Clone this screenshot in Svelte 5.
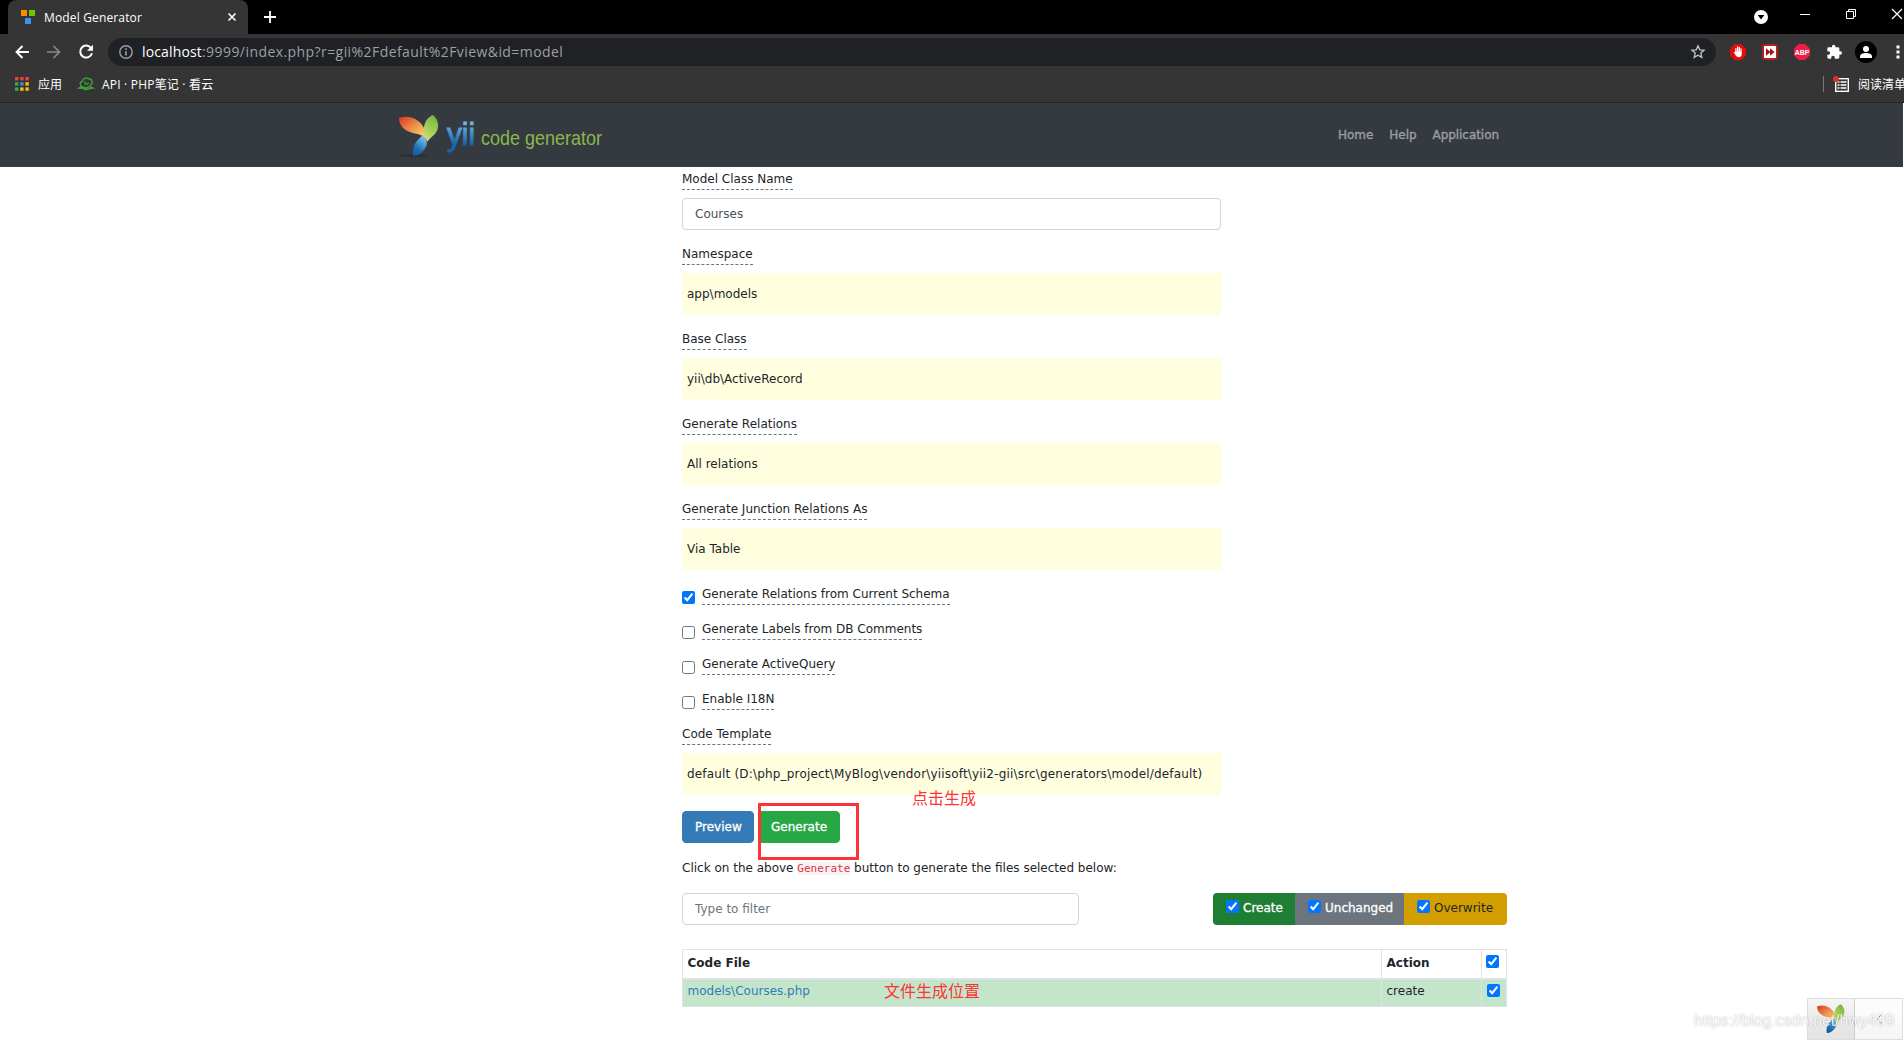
<script>
	let className = $state('Courses');
	let filter = $state('');

	const navLinks = ['Home', 'Help', 'Application'];

	const stickyFields = [
		{ label: 'Namespace', value: 'app\\models' },
		{ label: 'Base Class', value: 'yii\\db\\ActiveRecord' },
		{ label: 'Generate Relations', value: 'All relations' },
		{ label: 'Generate Junction Relations As', value: 'Via Table' }
	];

	let options = $state([
		{ label: 'Generate Relations from Current Schema', checked: true },
		{ label: 'Generate Labels from DB Comments', checked: false },
		{ label: 'Generate ActiveQuery', checked: false },
		{ label: 'Enable I18N', checked: false }
	]);

	let actions = $state([
		{ label: 'Create', kind: 'create', checked: true },
		{ label: 'Unchanged', kind: 'unchanged', checked: true },
		{ label: 'Overwrite', kind: 'overwrite', checked: true }
	]);

	const template = 'default (D:\\php_project\\MyBlog\\vendor\\yiisoft\\yii2-gii\\src\\generators\\model/default)';
	const gridColors = ['#ea4335', '#ea4335', '#ea4335', '#34a853', '#4285f4', '#fbbc04', '#34a853', '#fbbc04', '#fbbc04'];
</script>

{#snippet leaves()}
	<path d="M0 3C11-1 22 5 26 15C27 18 27 21 27 24C24 20 19 19 14 18C5 16 0 10 0 3Z" fill="url(#leafRed)" />
	<path d="M34 0C40 5 41 13 36 19C33 22 30 24 28 27C27 22 24 18 25 12C26 6 29 2 34 0Z" fill="url(#leafGreen)" />
	<path d="M24 20C27 23 29 28 27 32C24 37 20 41 14 41C13 36 14 31 17 27C19 24 22 22 24 20Z" fill="url(#leafBlue)" />
{/snippet}

<div class="browser">
	<div class="tabs">
		<div class="tab">
			<svg class="favicon" width="14" height="14" viewBox="0 0 14 14">
				<path d="M0 0h6v6H0z" fill="#ff8a00" />
				<path d="M8 0h6v6H8z" fill="#70c400" />
				<path d="M4 8h6v6H4z" fill="#3b92f0" />
			</svg>
			<span>Model Generator</span>
			<svg class="close" width="10" height="10" viewBox="0 0 10 10"><path d="M1.500 1.500l7 7M8.500 1.500l-7 7" stroke="#fff" stroke-width="1.6" /></svg>
		</div>
		<svg class="plus" width="12" height="12" viewBox="0 0 12 12"><path d="M6 0v12M0 6h12" stroke="#fff" stroke-width="1.8" /></svg>
		<div class="window">
			<svg width="14" height="14" viewBox="0 0 14 14"><circle cx="7" cy="7" r="7" fill="#fff" /><path d="M3.7 5h6.6L7 9.5z" fill="#000" /></svg>
			<svg class="min" width="10" height="10" viewBox="0 0 10 10"><path d="M0 5.5h10" stroke="#fff" /></svg>
			<svg class="restore" width="10" height="10" viewBox="0 0 10 10"><path d="M.5 2.5h7v7h-7zM2.5 2.5v-2h7v7h-2" fill="none" stroke="#fff" /></svg>
			<svg class="quit" width="10" height="10" viewBox="0 0 10 10"><path d="M0 0l10 10M10 0L0 10" stroke="#fff" stroke-width="1.2" /></svg>
		</div>
	</div>

	<div class="toolbar">
		<svg class="back" width="14" height="14" viewBox="0 0 14 14"><path d="M14 7H1.5M7.5 1l-6 6 6 6" fill="none" stroke="#fff" stroke-width="1.9" /></svg>
		<svg class="forward" width="14" height="14" viewBox="0 0 14 14"><path d="M0 7h12.5M6.5 1l6 6-6 6" fill="none" stroke="#8b8b8b" stroke-width="1.7" /></svg>
		<svg class="reload" width="16" height="16" viewBox="0 0 16 16"><path d="M13.2 4.2A6 6 0 1 0 14 9.2" fill="none" stroke="#fff" stroke-width="2" /><path d="M15 .8v6H9z" fill="#fff" /></svg>
		<div class="omnibox">
			<svg width="14" height="14" viewBox="0 0 14 14"><circle cx="7" cy="7" r="6.2" fill="none" stroke="#9aa0a6" stroke-width="1.4" /><path d="M7 6.2v4.3M7 3.3v1.6" stroke="#9aa0a6" stroke-width="1.6" /></svg>
			<span class="url"><b>localhost</b>:9999/index.php?r=gii%2Fdefault%2Fview&amp;id=model</span>
			<svg class="star" width="16" height="16" viewBox="0 0 16 16"><path d="M8 1.8l1.8 4 4.3.4-3.3 2.9 1 4.3L8 11.2l-3.8 2.2 1-4.3L1.9 6.2l4.3-.4z" fill="none" stroke="#c4c7ca" stroke-width="1.3" /></svg>
		</div>
		<div class="extensions">
			<svg width="16" height="16" viewBox="0 0 16 16">
				<path d="M4.7 0h6.6L16 4.7v6.6L11.3 16H4.7L0 11.3V4.7z" fill="#e40d0d" />
				<path d="M5.9 8V4.700M7.600 7.500V3M9.300 7.500V3.400M11 8V5" stroke="#fff" stroke-width="1.3" stroke-linecap="round" />
				<path d="M5.200 7.500h6.450v2.900c0 1.800-1.200 2.800-2.800 2.800-1.700 0-2.500-.8-3.400-2.200L3.800 8.500c.3-.6.9-.5 1.400 0z" fill="#fff" />
			</svg>
			<svg width="16" height="16" viewBox="0 0 16 16"><rect width="16" height="16" rx="3" fill="#b2201f" /><rect x="2" y="2" width="12" height="12" rx="1" fill="#fff" /><path d="M4 4.3L8.5 8 4 11.7zM8 4.3L12.6 8 8 11.7z" fill="#a11" /></svg>
			<svg width="16" height="16" viewBox="0 0 16 16"><path d="M4.7 0h6.6L16 4.7v6.6L11.3 16H4.7L0 11.3V4.7z" fill="#ed1e45" /><text x="8" y="10.700" text-anchor="middle" textLength="14.500" lengthAdjust="spacingAndGlyphs" class="abp">ABP</text></svg>
			<svg class="puzzle" width="16" height="16" viewBox="0 0 24 24"><path d="M21.500 11H20V7a2 2 0 0 0-2-2h-4V3.500a2.500 2.500 0 0 0-5 0V5H4a2 2 0 0 0-2 2v3.800h1.500a2.700 2.700 0 0 1 0 5.400H2V20a2 2 0 0 0 2 2h3.800v-1.500a2.700 2.700 0 0 1 5.400 0V22H18a2 2 0 0 0 2-2v-4h1.500a2.500 2.500 0 0 0 0-5z" fill="#fff" /></svg>
			<svg class="avatar" width="22" height="22" viewBox="0 0 22 22"><circle cx="11" cy="11" r="11" fill="#000" /><circle cx="11" cy="8" r="3" fill="#fff" /><path d="M5 17v-1.5c0-2.500 3-3.500 6-3.500s6 1 6 3.500V17z" fill="#fff" /></svg>
			<svg class="dots" width="4" height="14" viewBox="0 0 4 14"><path d="M.5.5h3v3h-3zM.5 5.5h3v3h-3zM.5 10.5h3v3h-3z" fill="#fff" /></svg>
		</div>
	</div>

	<div class="bookmarks">
		<svg width="14" height="14" viewBox="0 0 14 14">
			{#each gridColors as color, i}
				<rect x={(i % 3) * 5.2} y={Math.floor(i / 3) * 5.2} width="3.4" height="3.4" fill={color} />
			{/each}
		</svg>
		<span class="apps">应用</span>
		<svg class="cloud" width="16" height="14" viewBox="0 0 16 14"><path d="M4.5 10C1.5 8.5 1.5 5 4.5 4.3C4.5 1.5 8 0 10.3 1.7C14.5 1.5 15.5 6.5 11.5 9M7 4.500c-.5 3 3 3.500 3.500 1.200M1 11c2.500-1.300 5.500-1 7 .2c1.500-1.200 4.500-1.500 7-.2c-2.200.2-4.500.8-7 1.700c-2-1-4.500-1.500-7-1.700z" fill="none" stroke="#3fa037" stroke-width="1.4" /></svg>
		<span class="note">API · PHP笔记 · 看云</span>
		<div class="reading">
			<svg width="16" height="16" viewBox="0 0 16 16"><rect x="2.7" y="2.7" width="12.6" height="12.6" fill="none" stroke="#fff" stroke-width="1.4" /><path d="M4.500 6h2M4.500 9h2M4.500 12h2M7.500 6h6M7.500 9h6M7.500 12h6" stroke="#fff" stroke-width="1.3" /><circle cx="3" cy="3" r="3" fill="#d93025" /></svg>
			<span>阅读清单</span>
		</div>
	</div>
</div>

<div class="page">
	<nav>
		<svg class="logo" width="210" height="48" viewBox="0 0 210 48">
			<defs>
				<linearGradient id="leafRed" x1="0" y1="0" x2="1" y2="1"><stop offset="0" stop-color="#d7371f" /><stop offset=".5" stop-color="#ee914d" /><stop offset="1" stop-color="#fbe36b" /></linearGradient>
				<linearGradient id="leafGreen" x1=".7" y1="0" x2=".3" y2="1"><stop offset="0" stop-color="#72b63d" /><stop offset="1" stop-color="#d0df75" /></linearGradient>
				<linearGradient id="leafBlue" x1=".8" y1="0" x2=".3" y2="1"><stop offset="0" stop-color="#8bc8ed" /><stop offset=".7" stop-color="#1e6db4" /><stop offset="1" stop-color="#175a9e" /></linearGradient>
				<linearGradient id="yiiBlue" x1="0" y1="0" x2="0" y2="1"><stop offset="0.1" stop-color="#7dc1ef" /><stop offset=".8" stop-color="#1663aa" /></linearGradient>
			</defs>
			<ellipse cx="14" cy="44.500" rx="15" ry="1.5" fill="#2b2f33" />
			<g transform="translate(0 4)">{@render leaves()}</g>
			<text x="48" y="33.500" textLength="28" lengthAdjust="spacingAndGlyphs" class="yii" fill="url(#yiiBlue)">yii</text>
			<text x="82" y="33.500" textLength="121" lengthAdjust="spacingAndGlyphs" class="slogan">code generator</text>
		</svg>
		<div class="links">
			{#each navLinks as link}
				<span>{link}</span>
			{/each}
		</div>
	</nav>

	<main>
		<form>
			<div class="group">
				<label for="name">Model Class Name</label>
				<input id="name" class="control" type="text" bind:value={className} />
			</div>
			{#each stickyFields as field}
				<div class="group">
					<span class="label">{field.label}</span>
					<div class="sticky">{field.value}</div>
				</div>
			{/each}
			{#each options as option}
				<div class="option">
					<input type="checkbox" bind:checked={option.checked} />
					<span class="label">{option.label}</span>
				</div>
			{/each}
			<div class="group">
				<span class="label">Code Template</span>
				<div class="sticky">
					<span class="template">{template}</span>
					<span class="mark click">点击生成</span>
				</div>
			</div>
			<div class="buttons">
				<button type="button" class="preview">Preview</button>
				<button type="button" class="generate">Generate</button>
				<div class="frame"></div>
			</div>
		</form>

		<p>Click on the above <code>Generate</code> button to generate the files selected below:</p>

		<div class="filters">
			<input class="control filter" type="text" placeholder="Type to filter" bind:value={filter} />
			<div class="toggle">
				{#each actions as action}
					<label class={action.kind}>
						<input type="checkbox" bind:checked={action.checked} />{action.label}
					</label>
				{/each}
			</div>
		</div>

		<table>
			<thead>
				<tr>
					<th class="file">Code File</th>
					<th class="action">Action</th>
					<th class="check"><input type="checkbox" checked /></th>
				</tr>
			</thead>
			<tbody>
				<tr>
					<td class="file"><span class="link">models\Courses.php</span><span class="mark place">文件生成位置</span></td>
					<td>create</td>
					<td class="check"><input type="checkbox" checked /></td>
				</tr>
			</tbody>
		</table>
	</main>

	<div class="debug">
		<div class="debug-logo">
			<svg width="28" height="30" viewBox="0 0 40 42">{@render leaves()}</svg>
		</div>
		<div class="debug-toggle">
			<svg width="6" height="10" viewBox="0 0 6 10"><path d="M5.5.5L1 5l4.5 4.5" fill="none" stroke="#888" /></svg>
		</div>
	</div>
	<div class="watermark">https://blog.csdn.net/hwy499</div>
</div>

<style>
	:global(body) {
		margin: 0;
		background: #fff;
		overflow: hidden;
	}

	.browser {
		font-family: 'Open Sans', 'Noto Sans CJK SC', sans-serif;
		font-size: 12px;
		color: #fff;
		background: #353535;
		height: 102px;
		border-bottom: 1px solid #242424;
		overflow: hidden;
	}

	svg {
		display: block;
		flex: none;
		overflow: visible;
	}

	.tabs {
		display: flex;
		height: 34px;
		background: #000;
		padding-left: 8px;
	}

	.tab {
		display: flex;
		align-items: center;
		box-sizing: border-box;
		width: 240px;
		padding: 0 11px 0 13px;
		background: #353535;
		border-radius: 8px 8px 0 0;
	}

	.tab span {
		margin-left: 9px;
		letter-spacing: 0.15px;
	}

	.close {
		margin-left: auto;
	}

	.plus {
		margin: 11px 0 0 16px;
	}

	.window {
		display: flex;
		margin: 10px 2px 0 auto;
	}

	.min {
		margin: -1px 0 0 32px;
	}

	.restore {
		margin: -1px 0 0 36px;
	}

	.quit {
		margin: -1px 0 0 36px;
	}

	.toolbar {
		display: flex;
		align-items: center;
		height: 36px;
		padding: 0 4px 0 15px;
	}

	.forward {
		margin-left: 18px;
	}

	.reload {
		margin-left: 17px;
	}

	.omnibox {
		display: flex;
		flex: 1;
		align-items: center;
		height: 28px;
		margin-left: 14px;
		padding: 0 10px 0 11px;
		border-radius: 14px;
		background: #202124;
	}

	.url {
		margin: -2px 0 0 9px;
		font-size: 14px;
		color: #9aa0a6;
		letter-spacing: 0.43px;
	}

	.url b {
		font-weight: 400;
		color: #fff;
		letter-spacing: 0.15px;
	}

	.star {
		margin-left: auto;
	}

	.extensions {
		display: flex;
		align-items: center;
		gap: 16px;
		margin-left: 14px;
	}

	.abp {
		font: bold 7.5px 'Liberation Sans', sans-serif;
		fill: #fff;
	}

	.avatar {
		margin-left: -3px;
	}

	.dots {
		margin-left: 3px;
	}

	.bookmarks {
		display: flex;
		align-items: center;
		height: 28px;
		padding-left: 15px;
	}

	.bookmarks span {
		white-space: nowrap;
	}

	.apps {
		margin-left: 9px;
	}

	.cloud {
		margin-left: 16px;
	}

	.note {
		margin-left: 8px;
		letter-spacing: 0.2px;
	}

	.reading {
		display: flex;
		align-items: center;
		width: 80px;
		height: 16px;
		margin-left: auto;
		border-left: 1px solid #777;
	}

	.reading svg {
		margin: 0 9px;
	}

	.page {
		font: 12px/18px 'DejaVu Sans', Verdana, sans-serif;
		color: #212529;
	}

	nav {
		display: flex;
		align-items: center;
		height: 64px;
		margin-right: 1px;
		background: #343a40;
	}

	.logo {
		margin-left: 399px;
	}

	.yii {
		font: 31px 'Liberation Sans', sans-serif;
		stroke: url(#yiiBlue);
	}

	.slogan {
		font: 21px 'Liberation Sans', sans-serif;
		fill: #8bb64b;
	}

	.links {
		display: flex;
		gap: 16px;
		margin-left: auto;
		padding-right: 404px;
		color: #999c9f;
		letter-spacing: -0.05px;
		-webkit-text-stroke: 0.4px;
	}

	main {
		width: 825px;
		padding: 4px 0 0 682px;
	}

	form {
		width: 539px;
	}

	.group {
		margin-bottom: 16px;
	}

	.group > label,
	.label {
		display: block;
		width: fit-content;
		line-height: 17px;
		padding-bottom: 1px;
		border-bottom: 1px dashed #6c757d;
	}

	.control {
		display: block;
		box-sizing: border-box;
		width: 100%;
		height: 32px;
		padding: 6px 12px;
		border: 1px solid #ced4da;
		border-radius: 4px;
		font: inherit;
		color: #495057;
		outline: none;
	}

	.control::placeholder {
		color: #6c757d;
	}

	.group > .control,
	.sticky {
		margin-top: 8px;
	}

	.sticky {
		position: relative;
		padding: 12px 6px 12px 5px;
		background: #ffffe0;
		white-space: nowrap;
	}

	.template {
		letter-spacing: 0.18px;
	}

	input[type='checkbox'] {
		flex: none;
		width: 13px;
		height: 13px;
		margin: 0;
	}

	.option {
		display: flex;
		gap: 7px;
		margin-bottom: 16px;
	}

	.option input {
		margin-top: 5px;
	}

	.buttons {
		position: relative;
		display: flex;
		gap: 4px;
	}

	button {
		height: 32px;
		padding: 0 12px;
		border: 1px solid;
		border-radius: 4px;
		font: inherit;
		color: #fff;
		-webkit-text-stroke: 0.3px;
	}

	.preview {
		width: 72px;
		background: #337ab7;
		border-color: #337ab7;
	}

	.generate {
		width: 82px;
		background: #28a745;
		border-color: #28a745;
	}

	/* hand-drawn notes over the form */
	.frame {
		position: absolute;
		top: -8px;
		left: 76px;
		width: 95px;
		height: 51px;
		border: 3px solid #fd3436;
	}

	.mark {
		position: absolute;
		font: 16px/20px 'Noto Sans CJK SC', sans-serif;
		color: #fd3436;
	}

	.click {
		top: 34px;
		left: 230px;
	}

	.place {
		top: 0;
		left: 201px;
	}

	p {
		margin: 16px 0;
	}

	code {
		font: 11px 'DejaVu Sans Mono', monospace;
		color: #dc3545;
		background: #f9f2f4;
	}

	.filters {
		display: flex;
		justify-content: space-between;
		margin-bottom: 24px;
	}

	.filter {
		width: 397px;
	}

	.toggle {
		display: flex;
		border-radius: 4px;
		overflow: hidden;
	}

	.toggle label {
		display: flex;
		box-sizing: border-box;
		height: 32px;
		padding: 7px 0 0 13px;
		line-height: 17px;
		color: #fff;
		-webkit-text-stroke: 0.3px;
	}

	.toggle input {
		margin-right: 4px;
	}

	.create {
		width: 82px;
		background: #1e7e34;
	}

	.unchanged {
		width: 109px;
		background: #6c757d;
	}

	.toggle .overwrite {
		width: 103px;
		background: #d39e00;
		color: #212529;
		-webkit-text-stroke: 0;
	}

	table {
		width: 825px;
		table-layout: fixed;
		border-collapse: collapse;
	}

	th,
	td {
		box-sizing: border-box;
		height: 29px;
		padding: 0 5px 1px 4.5px;
		border: 1px solid #dee2e6;
		line-height: 17px;
		text-align: left;
	}

	td {
		height: 28px;
		padding-bottom: 2px;
	}

	th {
		border-bottom-width: 2px;
	}

	.file {
		position: relative;
	}

	.action {
		width: 100px;
	}

	.check {
		width: 25px;
		padding: 0 0 4px 4px;
		line-height: 0;
	}

	td.check {
		padding-left: 5px;
	}

	tbody tr {
		background: #c3e6cb;
	}

	.link {
		color: #337ab7;
	}

	.debug {
		position: fixed;
		right: 1px;
		bottom: 0;
		display: flex;
		box-sizing: border-box;
		width: 96px;
		height: 42px;
		border: 1px solid #ddd;
		background: linear-gradient(#fefefe, #f5f5f5);
	}

	.debug-logo,
	.debug-toggle {
		display: flex;
		align-items: center;
		justify-content: center;
	}

	.debug-logo {
		width: 46px;
		border-right: 1px solid #ccc;
		background: linear-gradient(#f5f5f5, #e2e2e2);
	}

	.debug-toggle {
		flex: 1;
	}

	.watermark {
		position: fixed;
		left: 1694px;
		bottom: 9px;
		font: 16px/20px 'Liberation Sans', sans-serif;
		letter-spacing: -0.1px;
		color: rgba(255, 255, 255, 0.8);
		text-shadow: 0 0 2px rgba(0, 0, 0, 0.3);
	}
</style>
